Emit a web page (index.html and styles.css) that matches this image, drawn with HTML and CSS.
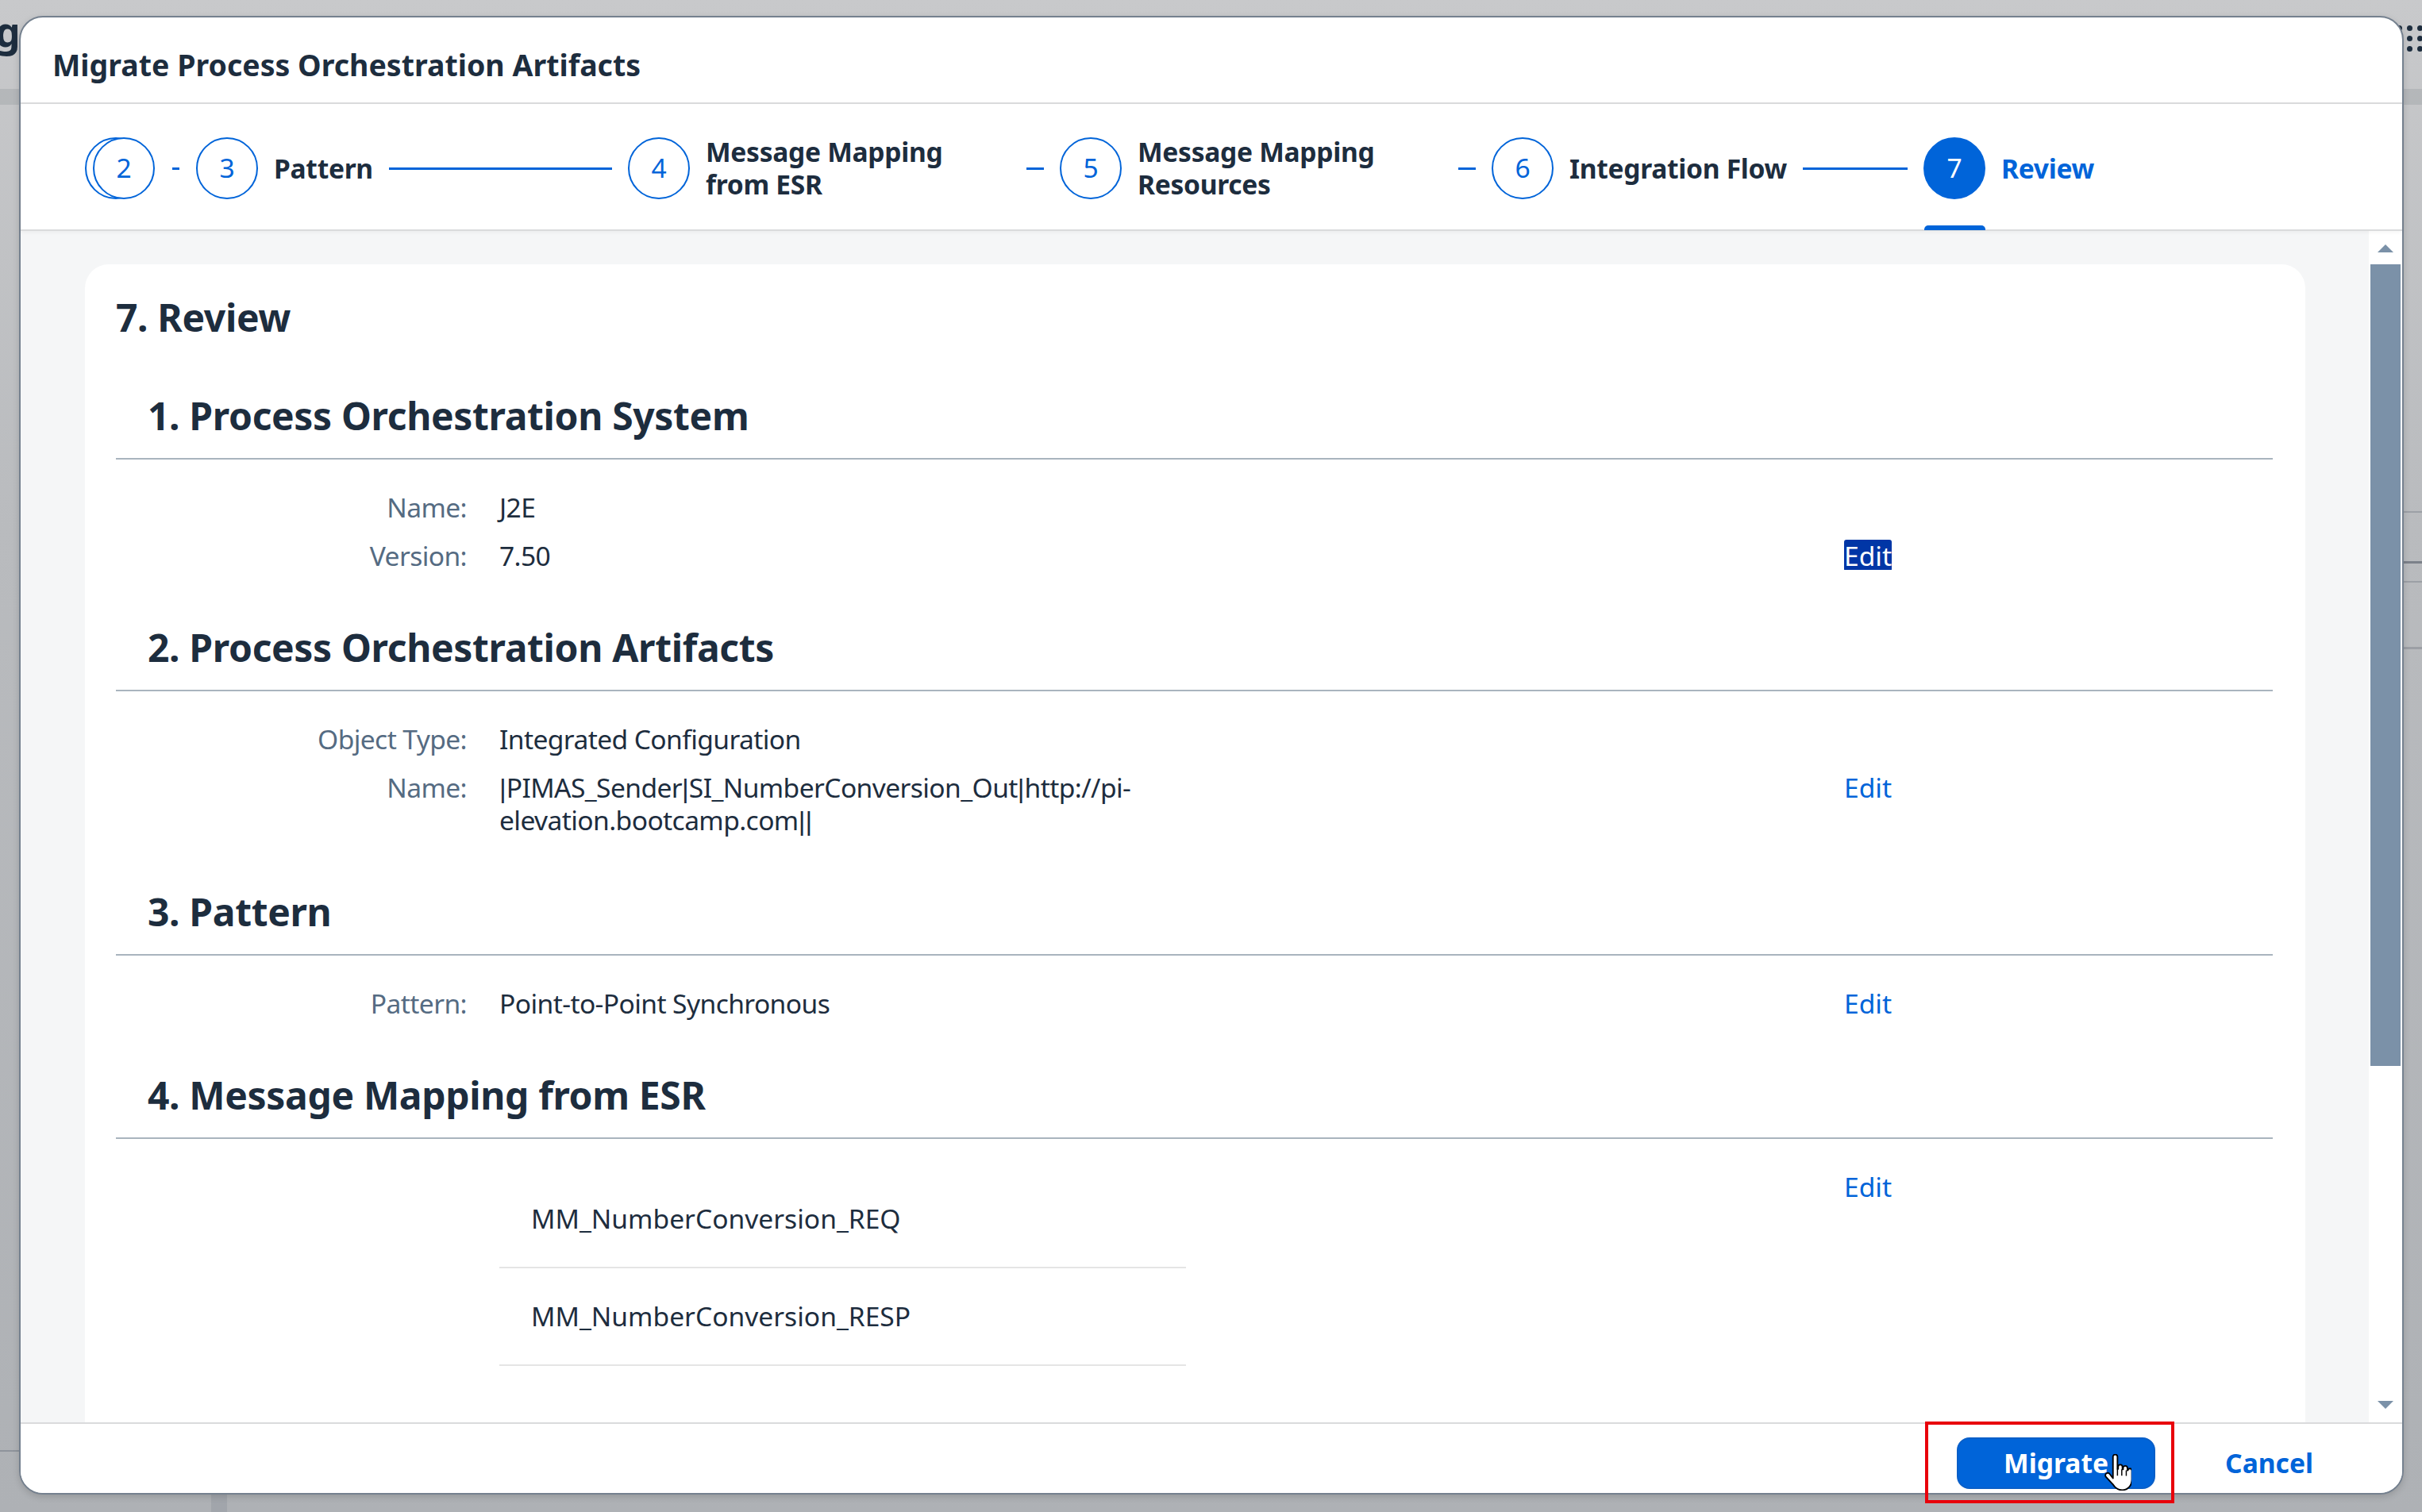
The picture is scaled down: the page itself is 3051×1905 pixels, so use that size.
FILE: index.html
```html
<!DOCTYPE html>
<html lang="en">
<head>
<meta charset="utf-8">
<title>Migrate Process Orchestration Artifacts</title>
<link rel="stylesheet" href="styles.css">
</head>
<body>
<div class="backdrop">
  <div class="bg-page" aria-hidden="true">
    <span class="bg-word">g</span>
    <span class="bg-grid"><i></i><i></i><i></i><i></i><i></i><i></i><i></i><i></i><i></i></span>
    <span class="bg-band"></span>
    <span class="bg-rline r1"></span>
    <span class="bg-rline r2"></span>
    <span class="bg-rline r3"></span>
    <span class="bg-rline r4"></span>
    <span class="bg-lline"></span>
    <span class="bg-col"></span>
  </div>

  <section class="dialog">
    <header class="dlg-header">
      <h1 class="dlg-title">Migrate Process Orchestration Artifacts</h1>
    </header>

    <nav class="wizard">
      <div class="step step-group">
        <span class="circle ghost"></span>
        <span class="circle stacked">2</span>
        <span class="conn short"></span>
      </div>
      <div class="step">
        <span class="circle">3</span>
        <span class="step-title">Pattern</span>
        <span class="conn"></span>
      </div>
      <div class="step">
        <span class="circle">4</span>
        <span class="step-title wrap">Message Mapping<br>from ESR</span>
        <span class="conn"></span>
      </div>
      <div class="step">
        <span class="circle">5</span>
        <span class="step-title wrap">Message Mapping<br>Resources</span>
        <span class="conn"></span>
      </div>
      <div class="step">
        <span class="circle">6</span>
        <span class="step-title">Integration Flow</span>
        <span class="conn"></span>
      </div>
      <div class="step current">
        <span class="circle">7</span>
        <span class="step-title">Review</span>
      </div>
    </nav>

    <div class="dlg-body">
      <div class="viewport">
        <div class="panel">
          <h2 class="review-title">7. Review</h2>

          <section class="section">
            <h3 class="sec-head">1. Process Orchestration System</h3>
            <div class="form">
              <span class="lbl">Name:</span><span class="val">J2E</span>
              <span class="lbl">Version:</span><span class="val">7.50</span><span class="edit"><span class="edit-sel">Edit</span></span>
            </div>
          </section>

          <section class="section">
            <h3 class="sec-head">2. Process Orchestration Artifacts</h3>
            <div class="form">
              <span class="lbl">Object Type:</span><span class="val">Integrated Configuration</span>
              <span class="lbl">Name:</span><span class="val"><span class="nw"><span class="bar">|</span>PIMAS_Sender<span class="bar">|</span>SI_NumberConversion_Out<span class="bar">|</span>http://pi-</span><br>elevation.bootcamp.com<span class="bar">||</span></span><span class="edit">Edit</span>
            </div>
          </section>

          <section class="section">
            <h3 class="sec-head">3. Pattern</h3>
            <div class="form">
              <span class="lbl">Pattern:</span><span class="val">Point-to-Point Synchronous</span><span class="edit">Edit</span>
            </div>
          </section>

          <section class="section">
            <h3 class="sec-head">4. Message Mapping from ESR</h3>
            <div class="form">
              <span class="lbl"></span>
              <ul class="mm-list">
                <li>MM_NumberConversion_REQ</li>
                <li>MM_NumberConversion_RESP</li>
              </ul>
              <span class="edit">Edit</span>
            </div>
          </section>
        </div>
      </div>
      <div class="scrollbar" aria-hidden="true">
        <span class="arrow up"></span>
        <span class="thumb"></span>
        <span class="arrow down"></span>
      </div>
    </div>

    <footer class="dlg-footer">
      <span class="btn-wrap">
        <button class="btn btn-primary" type="button">Migrate</button>
        <span class="annot" aria-hidden="true"></span>
        <svg class="cursor" viewBox="0 0 16 22" width="34" height="46" aria-hidden="true">
          <path d="M5 1.6C5 .8 5.6.3 6.3.3s1.4.5 1.4 1.3V9h.4V7.7c0-.8.6-1.3 1.3-1.3s1.3.5 1.3 1.3V9.2h.4V8.4c0-.8.6-1.3 1.3-1.3s1.3.5 1.3 1.3v1.4h.3c.1-.7.6-1.1 1.2-1.1.7 0 1.2.5 1.2 1.3v5.2c0 3.6-2.2 6.5-5.9 6.5-2.8 0-4.3-1.4-5.6-3.5L.7 13.7c-.5-.8-.3-1.7.4-2.1.7-.4 1.5-.2 2 .5L5 14.6V1.6z" fill="#fff" stroke="#000" stroke-width=".9" stroke-linejoin="round"/>
          <path d="M7.7 9v4M10.3 9.2v3.8M13 9.8v3.4" stroke="#000" stroke-width=".7" fill="none"/>
        </svg>
      </span>
      <button class="btn btn-ghost" type="button">Cancel</button>
    </footer>
  </section>
</div>
</body>
</html>
```

FILE: styles.css
```css
* { box-sizing: border-box; margin: 0; padding: 0; }

html, body {
  width: 3051px;
  height: 1905px;
  overflow: hidden;
}

body {
  font-family: "Noto Sans", "Open Sans", "Liberation Sans", sans-serif;
  color: #1d2d3e;
  background: linear-gradient(180deg, #c8c9cb 0%, #b9bbbe 35%, #aeb1b5 100%);
}

/* ---------- background page (under the modal) ---------- */
.backdrop {
  position: relative;
  height: 1905px;
  padding: 20px 23px 22px 24px;
  display: flex;
}

.bg-page {
  position: absolute;
  inset: 0;
  z-index: 0;
}

.bg-word {
  position: absolute;
  left: -6px;
  top: 15px;
  font-size: 50px;
  line-height: 50px;
  font-weight: 700;
  color: #1d2d3e;
}

.bg-grid {
  position: absolute;
  left: 3019px;
  top: 32px;
  display: grid;
  grid-template-columns: repeat(3, 7px);
  gap: 6px;
}

.bg-grid i {
  width: 7px;
  height: 7px;
  border-radius: 50%;
  background: #1d2d3e;
}

.bg-band {
  position: absolute;
  left: 0;
  right: 0;
  top: 112px;
  height: 20px;
  background: rgba(60, 70, 85, 0.12);
}

.bg-rline {
  position: absolute;
  right: 0;
  width: 30px;
  height: 2px;
  background: rgba(70, 80, 95, 0.25);
}
.bg-rline.r1 { top: 644px; }
.bg-rline.r2 { top: 707px; height: 3px; background: rgba(50, 60, 75, 0.45); }
.bg-rline.r3 { top: 732px; }
.bg-rline.r4 { top: 815px; height: 3px; }

.bg-lline {
  position: absolute;
  left: 0;
  width: 30px;
  top: 1827px;
  height: 2px;
  background: rgba(70, 80, 95, 0.3);
}

.bg-col {
  position: absolute;
  left: 266px;
  width: 20px;
  top: 1860px;
  bottom: 0;
  background: rgba(70, 80, 95, 0.12);
}

/* ---------- dialog ---------- */
.dialog {
  position: relative;
  z-index: 1;
  flex: 1;
  display: flex;
  flex-direction: column;
  background: #fff;
  border: 2px solid #75818f;
  border-radius: 30px;
  box-shadow: 0 3px 8px rgba(0, 0, 0, 0.15);
}

.dlg-header {
  height: 109px;
  padding: 37px 0 0 40px;
  border-bottom: 2px solid #dadbdc;
  border-radius: 28px 28px 0 0;
}

.dlg-title {
  font-size: 37.5px;
  line-height: 46px;
  font-weight: 700;
  color: #1d2d3e;
}

/* ---------- wizard navigation ---------- */
.wizard {
  position: relative;
  z-index: 2;
  height: 160px;
  display: flex;
  align-items: stretch;
  padding: 4px 0 0 81px;
  border-bottom: 2px solid #dadbdc;
  background: #fff;
  box-shadow: 0 2px 4px rgba(0, 0, 0, 0.04);
}

.step {
  flex: 0 0 544px;
  display: flex;
  align-items: center;
}

.step-group { flex: 0 0 140px; }

.circle {
  flex: 0 0 78px;
  width: 78px;
  height: 78px;
  border-radius: 50%;
  border: 2.5px solid #0064d9;
  background: #fff;
  color: #0064d9;
  font-size: 33.6px;
  line-height: 1;
  display: flex;
  align-items: center;
  justify-content: center;
}

.circle.stacked {
  margin-left: -68px;
  position: relative;
}

.step-title {
  flex: 0 0 auto;
  margin-left: 20px;
  font-size: 33.6px;
  line-height: 41px;
  font-weight: 700;
  letter-spacing: -0.3px;
  color: #1d2d3e;
  white-space: nowrap;
}

.step-title.wrap {
  width: 384px;
  white-space: normal;
}

.conn {
  flex: 1 1 auto;
  min-width: 21px;
  height: 3px;
  margin: 0 20px;
  background: #0064d9;
}

.conn.short {
  flex: 0 0 9px;
  min-width: 9px;
  margin: 0 21px 0 22px;
}

.step.current { position: relative; }

.step.current .circle {
  background: #0064d9;
  color: #fff;
}

.step.current .step-title { color: #0064d9; }

.step.current::after {
  content: "";
  position: absolute;
  left: 1px;
  bottom: -1px;
  width: 77px;
  height: 6px;
  border-radius: 5px 5px 0 0;
  background: #0064d9;
}

/* ---------- scroll body ---------- */
.dlg-body {
  flex: 1;
  min-height: 0;
  display: flex;
}

.viewport {
  flex: 1;
  overflow: hidden;
  background: #f5f6f7;
  padding: 42px 80px 0 81px;
}

.panel {
  background: #fff;
  border-radius: 30px 30px 0 0;
  padding: 38px 41px 300px 39px;
}

.review-title {
  font-size: 48px;
  line-height: 58px;
  font-weight: 700;
  letter-spacing: -0.35px;
}

.section { margin-top: 66px; }

.sec-head {
  font-size: 48px;
  line-height: 58px;
  font-weight: 700;
  letter-spacing: -0.35px;
  padding: 0 0 24px 40px;
  border-bottom: 2px solid #a9b4be;
}

.form {
  display: grid;
  grid-template-columns: 442px 865px 747px auto;
  column-gap: 41px;
  row-gap: 20px;
  padding-top: 40px;
  font-size: 33.6px;
  line-height: 41px;
  letter-spacing: -0.6px;
}

.lbl {
  grid-column: 1;
  text-align: right;
  color: #556b82;
}

.val {
  grid-column: 2;
  color: #1d2d3e;
}

.nw { white-space: nowrap; }

.bar {
  font-family: "Liberation Sans", sans-serif;
  letter-spacing: 0;
  line-height: 0;
}

.edit {
  grid-column: 4;
  color: #0064d9;
  align-self: start;
  letter-spacing: 0;
}

.edit-sel {
  display: inline-block;
  line-height: 40px;
  background: #0036a6;
  color: #fff;
  text-decoration: underline;
  text-decoration-thickness: 2px;
  text-underline-offset: 5px;
  border-radius: 3px;
}

.mm-list {
  grid-column: 2;
  list-style: none;
  letter-spacing: 0;
}

.mm-list li {
  height: 123px;
  line-height: 121px;
  padding-left: 40px;
  border-bottom: 2px solid #e5e5e5;
  color: #1d2d3e;
}

.scrollbar {
  flex: 0 0 42px;
  background: #fff;
  display: flex;
  flex-direction: column;
  align-items: center;
}

.arrow {
  width: 0;
  height: 0;
  border-left: 10px solid transparent;
  border-right: 10px solid transparent;
}

.arrow.up {
  margin-top: 17px;
  border-bottom: 10px solid #7b91a8;
}

.thumb {
  margin-top: 15px;
  width: 38px;
  height: 1010px;
  background: #7b91a8;
}

.arrow.down {
  margin-top: auto;
  margin-bottom: 17px;
  border-top: 10px solid #7b91a8;
}

/* ---------- footer ---------- */
.dlg-footer {
  position: relative;
  z-index: 3;
  height: 89px;
  display: flex;
  justify-content: flex-end;
  align-items: flex-start;
  padding: 17px 90px 0 0;
  border-top: 2px solid #dadbdc;
  border-radius: 0 0 28px 28px;
  background: #fff;
}

.btn-wrap {
  position: relative;
  display: block;
}

.btn {
  display: block;
  font-family: inherit;
  font-size: 33.6px;
  font-weight: 700;
  height: 65px;
  line-height: 61px;
  border-radius: 16px;
  cursor: pointer;
}

.btn-primary {
  width: 250px;
  background: #0064d9;
  border: 2px solid #0a5fc8;
  color: #fff;
}

.btn-ghost {
  margin-left: 66px;
  padding: 0 22px;
  background: transparent;
  border: 0;
  color: #0064d9;
}

.annot {
  position: absolute;
  left: -40px;
  top: -20px;
  right: -24px;
  bottom: -18px;
  border: 4px solid #e8000b;
  pointer-events: none;
}

.cursor {
  position: absolute;
  left: 186px;
  top: 21px;
}
```
